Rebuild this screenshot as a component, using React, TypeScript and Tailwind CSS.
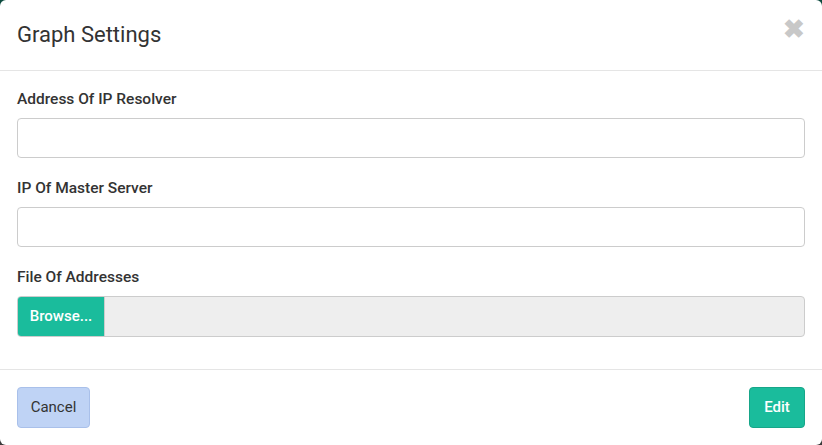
import React from "react";

const font = {fontFamily: '"Roboto", "Liberation Sans", sans-serif'};

function Field(props: {label: string}) {
	return (
		<div className="flex flex-col">
			<label className="text-[15.5px] font-medium text-[#333] leading-[20px] mb-[9px]">{props.label}</label>
			<input className="h-[40px] w-full rounded-[4px] border border-[#ccc] bg-white px-3 outline-none" />
		</div>
	);
}

export default function App() {
	return (
		<div className="w-[822px] h-[445px] bg-gradient-to-b from-[#0c4a3e] to-[#3a3a3a]" style={font}>
			<div className="w-full h-full bg-white rounded-[6px] flex flex-col">
				<div className="h-[71px] border-b border-[#e5e5e5] flex items-center justify-between pl-[17px] pr-[17px]">
					<h4 className="text-[22px] text-[#333] leading-none">Graph Settings</h4>
					<span className="text-[#c8c8c8] text-[26px] font-bold leading-none -mt-[12px]">✖</span>
				</div>
				<div className="px-[17px] pt-[18px] pb-[32px] flex flex-col gap-[20px] border-b border-[#e5e5e5]">
					<Field label="Address Of IP Resolver" />
					<Field label="IP Of Master Server" />
					<div className="flex flex-col">
						<label className="text-[15.5px] font-medium text-[#333] leading-[20px] mb-[9px]">File Of Addresses</label>
						<div className="h-[41px] flex rounded-[4px] border border-[#ccc] bg-[#eee] overflow-hidden">
							<div className="w-[87px] bg-[#1abc9c] text-white text-[15px] font-medium flex items-center justify-center border-r border-[#ccc]">Browse...</div>
							<div className="flex-1" />
						</div>
					</div>
				</div>
				<div className="flex items-center justify-between px-[17px] pt-[17px]">
					<button className="h-[41px] w-[73px] rounded-[4px] bg-[#bfd3f5] border border-[#a9c0ea] text-[#333] text-[15px]">Cancel</button>
					<button className="h-[41px] w-[56px] rounded-[4px] bg-[#1abc9c] border border-[#17a689] text-white text-[15px] font-medium">Edit</button>
				</div>
			</div>
		</div>
	);
}
